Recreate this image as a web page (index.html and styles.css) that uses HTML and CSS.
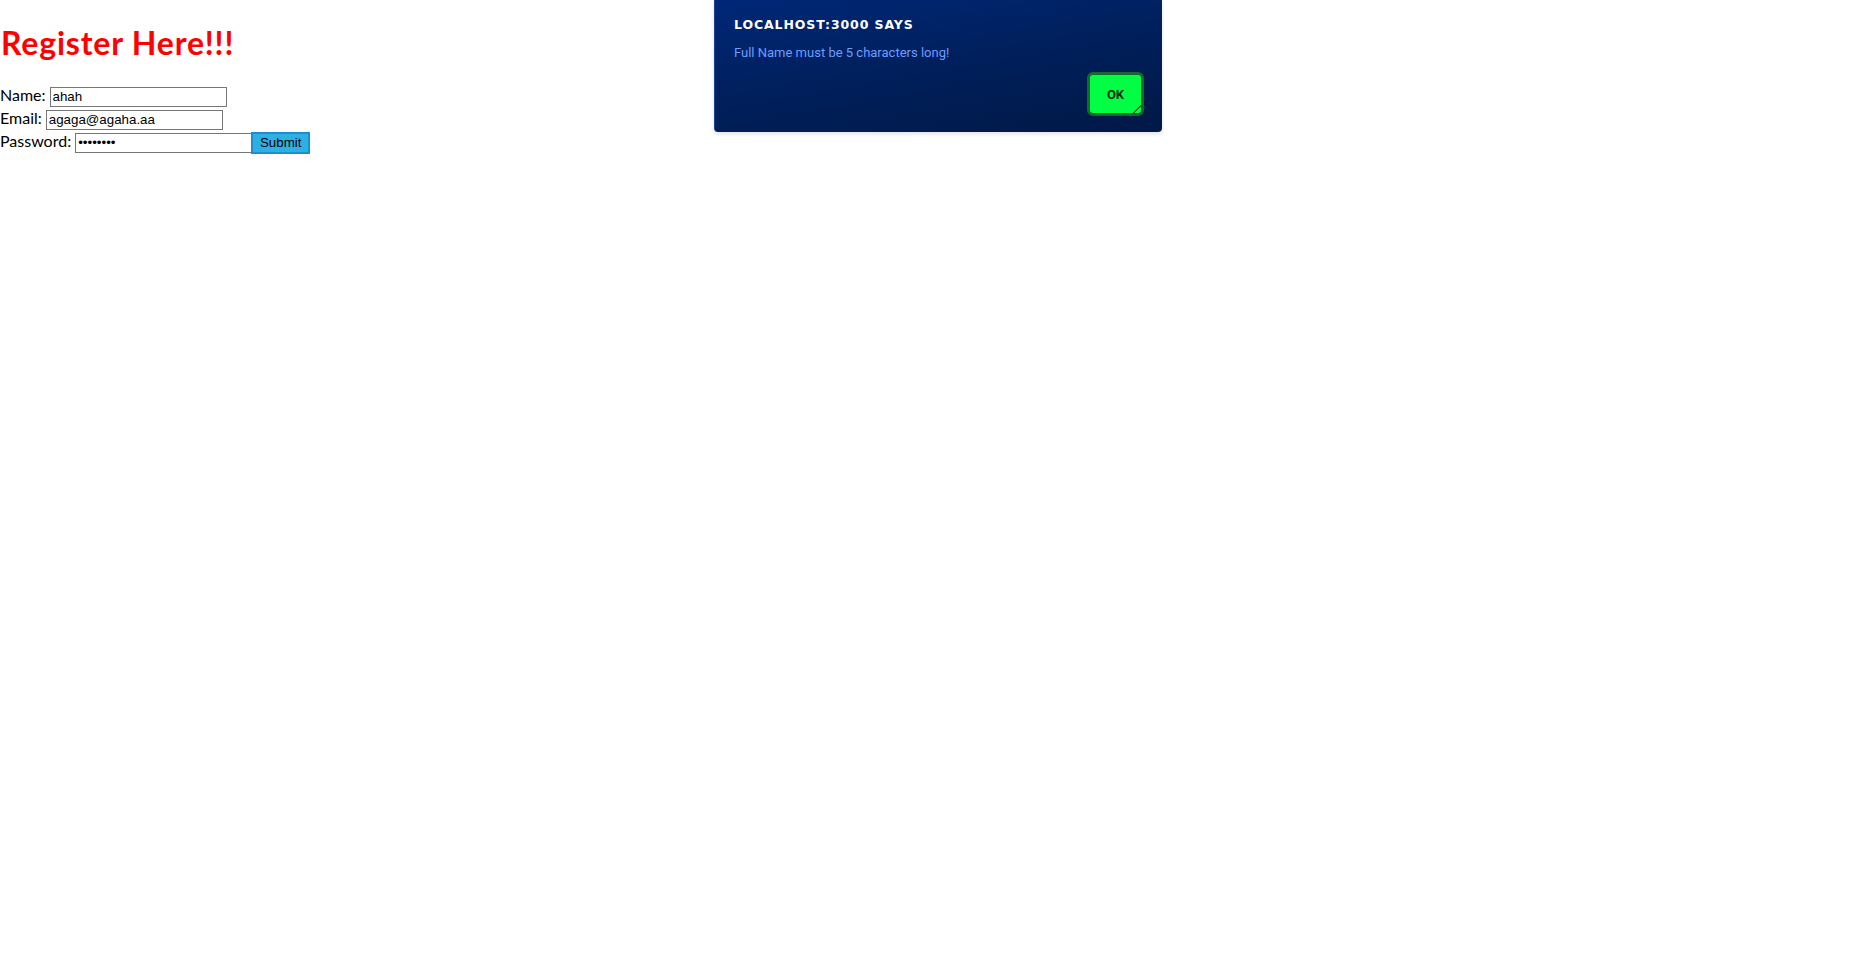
FILE: index.html
```html
<!DOCTYPE html>
<html lang="en">
<head>
<meta charset="utf-8">
<title>Register</title>
<link rel="stylesheet" href="styles.css">
</head>
<body>
<h1 class="title">Register Here!!!</h1>
<form class="form">
  <div class="row"><label class="label">Name:</label><input class="field" type="text" value="ahah"></div>
  <div class="row"><label class="label">Email:</label><input class="field" type="text" value="agaga@agaha.aa"></div>
  <div class="row"><label class="label">Password:</label><input class="field" type="password" value="abcdefgh"><button class="submit" type="button">Submit</button></div>
</form>

<div class="dialog">
  <div class="dialog-title">LOCALHOST:3000 SAYS</div>
  <div class="dialog-msg">Full Name must be 5 characters long!</div>
  <div class="dialog-actions"><button class="ok" type="button">OK</button></div>
</div>
</body>
</html>
```

FILE: styles.css
```css
html, body {
  margin: 0;
  padding: 0;
  background: #ffffff;
}
body {
  font-family: Lato, "Noto Sans", sans-serif;
  font-size: 16px;
  color: #000;
}
.title {
  color: #ff0000;
  font-size: 32px;
  font-weight: 700;
  letter-spacing: 0.8px;
  margin: 24px 0 23px 1px;
  line-height: 38px;
}
.form {
  margin: 0;
}
.row {
  display: flex;
  align-items: baseline;
  height: 23px;
}
.label {
  margin-right: 4px;
}
.field {
  box-sizing: border-box;
  width: 177px;
  height: 20px;
  margin: 0;
  padding: 1px 2px;
  border: 1px solid #767676;
  font-family: "Liberation Sans", Arial, sans-serif;
  font-size: 13.333px;
  color: #000;
  background: #fff;
}
.submit {
  box-sizing: border-box;
  width: 59px;
  height: 22px;
  margin-left: -1px;
  padding: 0;
  border: 2px solid #1b8fd2;
  background: #2db1e5;
  font-family: "Liberation Sans", Arial, sans-serif;
  font-size: 13.333px;
  color: #000;
}
.dialog {
  position: absolute;
  top: 0;
  left: 714px;
  width: 448px;
  height: 132px;
  box-sizing: border-box;
  padding: 16px 18px 0 19px;
  background: linear-gradient(170deg, #002878 0%, #00205e 45%, #001845 100%);
  border-left: 1px solid #1d3f9c;
  border-radius: 0 0 4px 4px;
  box-shadow: 0 2px 4px rgba(0, 0, 0, 0.12);
  display: flex;
  flex-direction: column;
}
.dialog-title {
  font-family: "DejaVu Sans", sans-serif;
  font-weight: 700;
  font-size: 12.5px;
  letter-spacing: 0.9px;
  color: #ffffff;
  line-height: 18px;
}
.dialog-msg {
  margin-top: 11px;
  font-family: Roboto, "Liberation Sans", sans-serif;
  font-size: 13px;
  color: #6f9cff;
  line-height: 16px;
}
.dialog-actions {
  display: flex;
  justify-content: flex-end;
  margin-top: 11px;
}
.ok {
  position: relative;
  box-sizing: border-box;
  width: 57px;
  height: 44px;
  padding: 0;
  border: 3px solid #17682c;
  border-radius: 6px;
  background: #00ff44;
  font-family: Roboto, "Liberation Sans", sans-serif;
  font-weight: 700;
  font-size: 13px;
  color: #0b2a12;
}
.ok::after {
  content: "";
  position: absolute;
  right: 0;
  bottom: 0;
  width: 8px;
  height: 8px;
  background: linear-gradient(135deg, transparent 46%, #17682c 46%, #17682c 60%, transparent 60%);
}
```
